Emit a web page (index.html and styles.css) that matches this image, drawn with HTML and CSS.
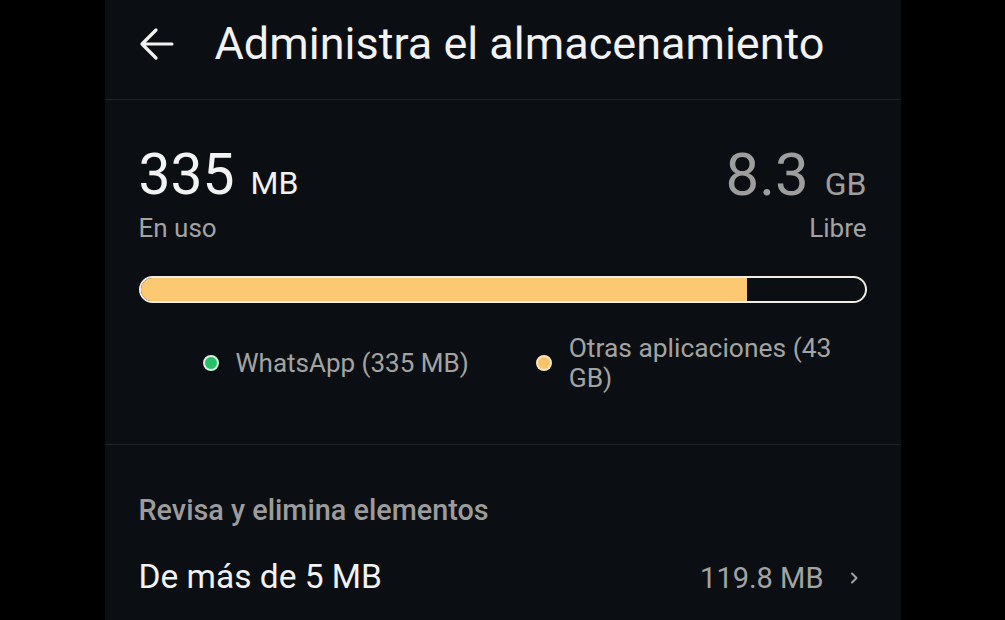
FILE: index.html
```html
<!DOCTYPE html>
<html lang="es">

<head>
  <meta charset="UTF-8">
  <meta name="viewport" content="width=device-width, initial-scale=1.0">
  <title>Administra el almacenamiento</title>
  <link rel="stylesheet" href="styles.css">
</head>

<body>
  <div class="screen">

    <div class="topbar">
      <svg class="back" width="36" height="34" viewBox="0 0 36 34">
        <path d="M34 17H4M18 3L4 17l14 14" fill="none" stroke="#f2f2f2" stroke-width="3.2" stroke-linecap="round" stroke-linejoin="round" />
      </svg>
      <h1 class="title">Administra el almacenamiento</h1>
    </div>

    <div class="usage">
      <div class="stats">
        <div class="stat">
          <p class="value"><span class="num">335</span><span class="unit">MB</span></p>
          <p class="label">En uso</p>
        </div>
        <div class="stat free">
          <p class="value"><span class="num">8.3</span><span class="unit">GB</span></p>
          <p class="label">Libre</p>
        </div>
      </div>

      <div class="bar">
        <div class="bar-fill" style="width: 83.8%"></div>
      </div>

      <div class="legend">
        <div class="legend-item">
          <span class="dot green"></span>
          <span class="legend-text">WhatsApp (335 MB)</span>
        </div>
        <div class="legend-item">
          <span class="dot yellow"></span>
          <span class="legend-text wrap">Otras aplicaciones (43 GB)</span>
        </div>
      </div>
    </div>

    <div class="review">
      <p class="section-title">Revisa y elimina elementos</p>
      <div class="row">
        <span class="row-name">De más de 5 MB</span>
        <span class="row-size">119.8 MB</span>
        <svg class="chevron" width="14" height="14" viewBox="0 0 14 14">
          <path d="M5 2.5l4.5 4.5L5 11.5" fill="none" stroke="#a3a3a3" stroke-width="2" stroke-linecap="round" stroke-linejoin="round" />
        </svg>
      </div>
    </div>

  </div>
</body>

</html>
```

FILE: styles.css
```css
* {
  margin: 0;
  padding: 0;
  box-sizing: border-box;
}

body {
  background: #000;
  font-family: Roboto, "Noto Sans", sans-serif;
  color: #f2f2f2;
}

.screen {
  width: 796px;
  height: 620px;
  margin: 0 auto;
  background: #0b0f13;
  overflow: hidden;
}

/* header */

.topbar {
  height: 100px;
  display: flex;
  align-items: center;
  padding-left: 34px;
  border-bottom: 1px solid #1f2428;
}

.topbar .back {
  flex: none;
  margin-left: -1px;
  margin-right: 41px;
  margin-top: -12px;
}

.topbar .title {
  font-size: 45px;
  font-weight: 400;
  line-height: 54px;
  margin-top: -12px;
}

/* usage summary */

.usage {
  padding: 45px 34px 51px;
  border-bottom: 1px solid #1f2428;
}

.stats {
  display: flex;
  justify-content: space-between;
}

.stat .value {
  display: flex;
  align-items: baseline;
  line-height: 60px;
  white-space: nowrap;
}

.stat .num {
  font-size: 57px;
}

.stat .unit {
  font-size: 32px;
  line-height: 1;
  margin-left: 16px;
}

.stat .label {
  font-size: 26px;
  line-height: 30px;
  margin-top: 8px;
  color: #a3a3a3;
}

.stat.free {
  text-align: right;
}

.stat.free .value {
  justify-content: flex-end;
  color: #9e9e9e;
}

.stat.free .num {
  font-size: 60px;
}

.bar {
  margin-top: 33px;
  height: 27px;
  border: 2px solid #f1ede4;
  border-radius: 14px;
  overflow: hidden;
  background: #0b0f13;
}

.bar-fill {
  height: 100%;
  background: #fcc972;
}

.legend {
  margin-top: 30px;
  display: flex;
  align-items: center;
  gap: 67px;
  padding-left: 64px;
}

.legend-item {
  display: flex;
  align-items: center;
  gap: 17px;
}

.legend-text {
  font-size: 26px;
  line-height: 30px;
  color: #a3a3a3;
}

.legend-text.wrap {
  font-size: 26.4px;
  max-width: 290px;
}

.dot {
  flex: none;
  width: 16px;
  height: 16px;
  border-radius: 50%;
  border: 2px solid #d9efe0;
}

.dot.green {
  background: #25c16a;
}

.dot.yellow {
  background: #f7c46c;
  border-color: #fbe6c0;
}

/* review items */

.review {
  padding: 50px 34px 0;
}

.section-title {
  font-size: 28.8px;
  font-weight: 500;
  line-height: 30px;
  color: #9c9c9c;
}

.row {
  margin-top: 34px;
  display: flex;
  align-items: baseline;
  line-height: 36px;
}

.row-name {
  font-size: 33.5px;
  flex: 1;
}

.row-size {
  font-size: 29px;
  color: #a3a3a3;
}

.row .chevron {
  align-self: center;
  margin-left: 23px;
  margin-right: 6px;
}
```
